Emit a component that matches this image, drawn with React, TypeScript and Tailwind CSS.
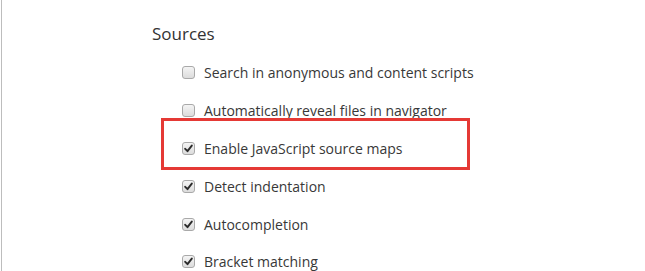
const ITEMS = [
  { label: "Search in anonymous and content scripts", checked: false },
  { label: "Automatically reveal files in navigator", checked: false },
  { label: "Enable JavaScript source maps", checked: true, highlight: true },
  { label: "Detect indentation", checked: true },
  { label: "Autocompletion", checked: true },
  { label: "Bracket matching", checked: true },
];

function Box({ checked }: { checked: boolean }) {
  return (
    <span className="w-[13px] h-[13px] shrink-0 rounded-[3px] border border-[#a9a9a9] bg-gradient-to-b from-[#f4f4f4] to-[#dcdcdc] flex items-center justify-center">
      {checked && (
        <svg width="9" height="9" viewBox="0 0 9 9">
          <path d="M1.2 4.8 L3.5 7.2 L7.8 1.6" fill="none" stroke="#2b2b2b" strokeWidth="1.9" strokeLinecap="round" strokeLinejoin="round" />
        </svg>
      )}
    </span>
  );
}

export default function App() {
  return (
    <div className="w-[645px] h-[271px] overflow-hidden bg-white flex font-['Open_Sans',sans-serif]">
      <div className="w-[1px] ml-[1px] bg-[#bdbdbd]" />
      <div className="pl-[150px] pt-[22px] relative">
        <h2 className="text-[17px] leading-[24px] text-[#333]">Sources</h2>
        <div className="mt-[8px] flex flex-col">
          {ITEMS.map((it) => (
            <label key={it.label} className="relative h-[37.8px] flex items-center gap-[9px] pl-[30px] text-[14px] text-[#383838]">
              {it.highlight && (
                <span className="absolute left-[9px] top-[-12px] w-[309px] h-[52px] border-[3px] border-[#e53935]" />
              )}
              <Box checked={it.checked} />
              <span>{it.label}</span>
            </label>
          ))}
        </div>
      </div>
    </div>
  );
}
